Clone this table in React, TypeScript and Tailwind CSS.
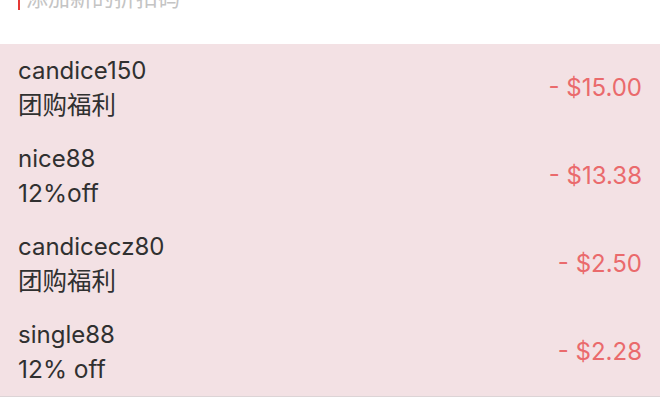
import React from 'react';

const codes = [
    { code: 'candice150', desc: '团购福利', amount: '- $15.00' },
    { code: 'nice88', desc: '12%off', amount: '- $13.38' },
    { code: 'candicecz80', desc: '团购福利', amount: '- $2.50' },
    { code: 'single88', desc: '12% off', amount: '- $2.28' },
];

const App = () => {
    return (
        <div className="w-[660px] h-[400px] bg-white overflow-hidden font-['Inter','Noto_Sans_CJK_SC',sans-serif]">
            {/* input placeholder, scrolled partly off the top */}
            <div className="h-[44px] overflow-hidden">
                <div className="ml-[18px] -mt-[14px] flex items-center">
                    <div className="w-[2px] h-[24px] bg-[#e53935]" />
                    <span className="ml-[6px] text-[22px] leading-[24px] text-[#c4c4c4]">添加新的折扣码</span>
                </div>
            </div>

            {/* applied codes */}
            <div className="bg-[#f3e1e4] border-b border-[#dcd4d6]">
                {codes.map((item) => (
                    <div key={item.code} className="h-[88px] px-[18px] flex items-center justify-between">
                        <div className="flex flex-col text-[24px] leading-[34px] text-[#303030]">
                            <span>{item.code}</span>
                            <span className="text-[24.5px]">{item.desc}</span>
                        </div>
                        <span className="text-[24px] text-[#ea6a6c]">{item.amount}</span>
                    </div>
                ))}
            </div>
        </div>
    );
};

export default App;
